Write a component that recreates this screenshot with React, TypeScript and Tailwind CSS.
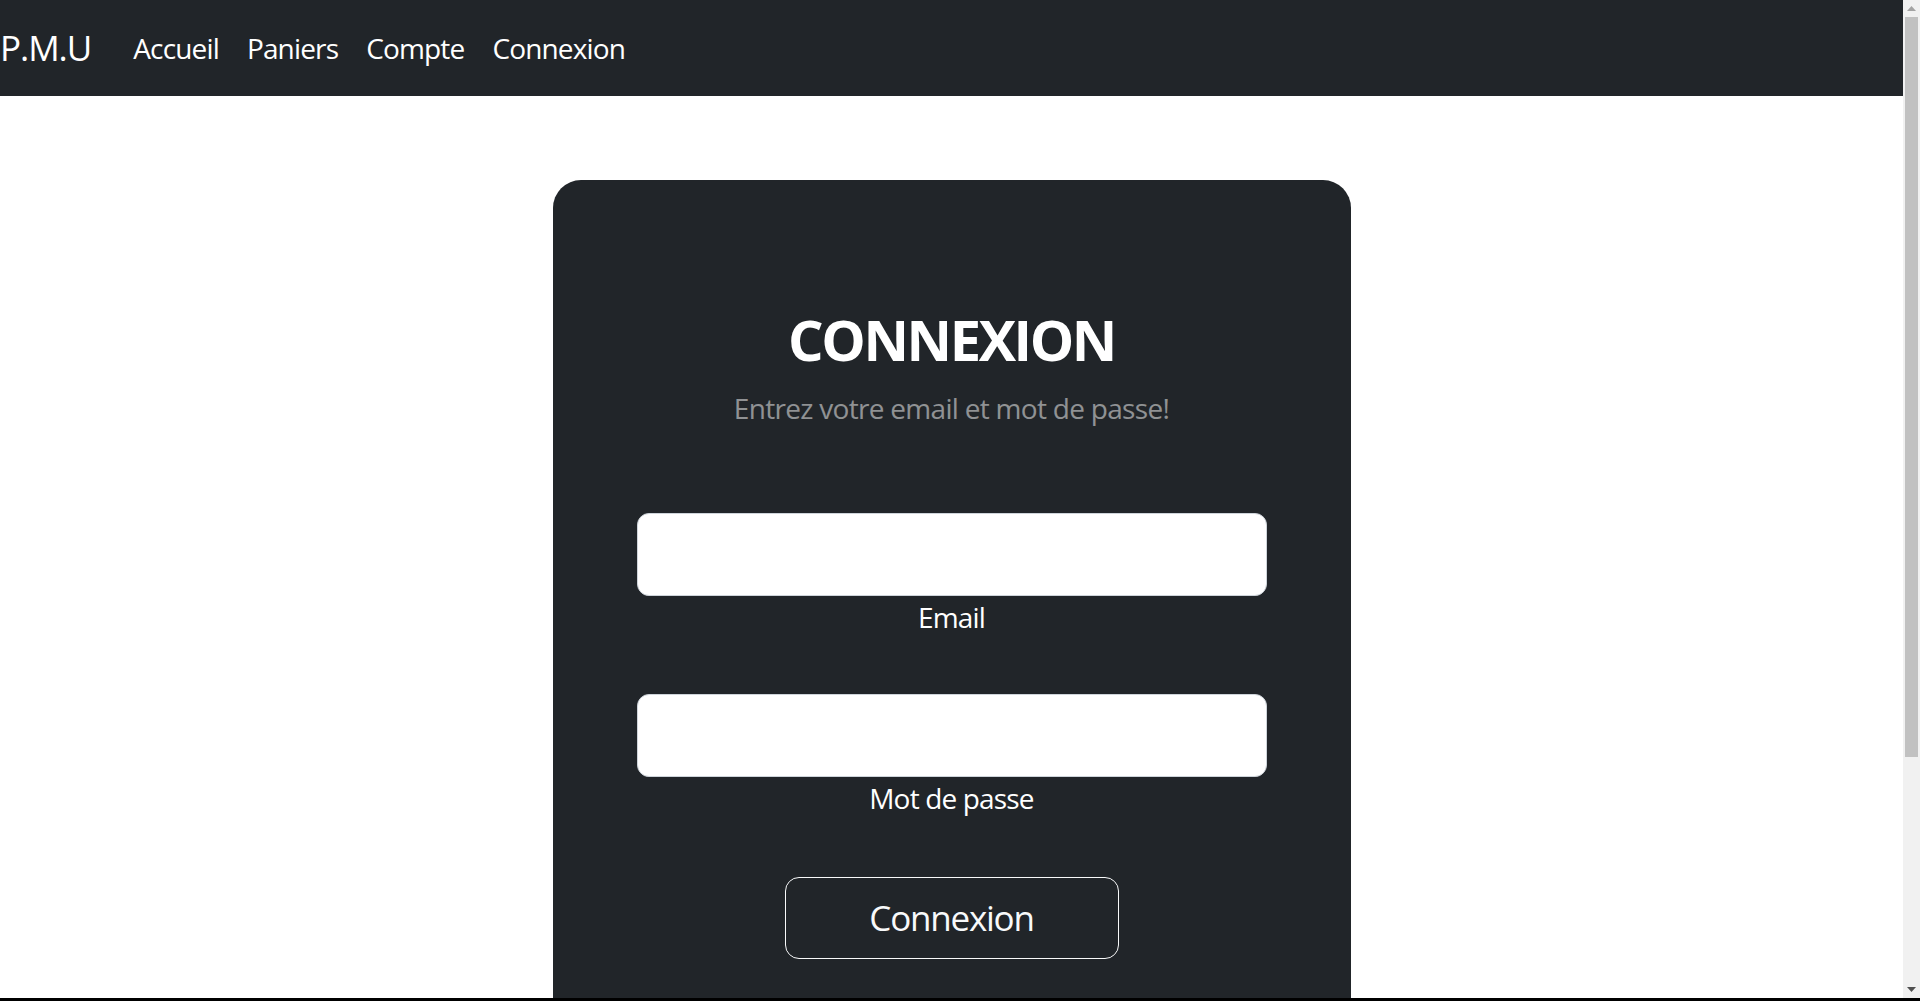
import React from "react";

const NAV_LINKS = ["Accueil", "Paniers", "Compte", "Connexion"];

// browser-style vertical scrollbar (the page is taller than the window)
function Scrollbar() {
  return (
    <div className="flex w-[17px] shrink-0 flex-col bg-[#f1f1f1]">
      <div className="flex h-[17px] shrink-0 items-center justify-center">
        <svg width="9" height="5" viewBox="0 0 9 5">
          <path d="M0 5 L4.5 0 L9 5 Z" fill="#a3a3a3" />
        </svg>
      </div>
      <div className="flex min-h-0 flex-1 flex-col px-[2px]">
        <div className="h-[740px] shrink-0 bg-[#c1c1c1]" />
      </div>
      <div className="flex h-[17px] shrink-0 items-center justify-center">
        <svg width="9" height="5" viewBox="0 0 9 5">
          <path d="M0 0 L9 0 L4.5 5 Z" fill="#505050" />
        </svg>
      </div>
    </div>
  );
}

export default function App() {
  return (
    <div className="flex h-screen flex-col bg-black font-['Open_Sans',sans-serif]">
      <div className="flex min-h-0 flex-1">
        <div className="min-w-0 flex-1 overflow-hidden bg-white">
          <nav className="flex h-[96px] items-center bg-[#212529]">
            <a href="#" className="mr-[28px] text-[35px] leading-[52px] tracking-[-0.03em] text-white">
              P.M.U
            </a>
            <ul className="flex">
              {NAV_LINKS.map((label) => (
                <li key={label}>
                  <a href="#" className="block px-[14px] text-[28px] leading-[42px] tracking-[-0.03em] text-white">
                    {label}
                  </a>
                </li>
              ))}
            </ul>
          </nav>

          <main className="flex justify-center pt-[84px] pb-[174px]">
            <div className="w-[798px] rounded-[28px] bg-[#212529] px-[84px] pt-[126px] pb-[168px] text-center text-white">
              <h2 className="text-[56px] font-bold uppercase leading-[67px] tracking-[-0.043em]">Connexion</h2>
              <p className="mt-[14px] text-[28px] leading-[42px] tracking-[-0.025em] text-white/50">
                Entrez votre email et mot de passe!
              </p>

              <form className="mt-[84px]" onSubmit={(e) => e.preventDefault()}>
                <div className="mb-[56px]">
                  <input
                    type="email"
                    id="email"
                    className="block h-[83px] w-full rounded-[12px] border border-[#ced4da] bg-white px-[28px] text-[35px] text-[#212529] outline-none"
                  />
                  <label htmlFor="email" className="block text-[28px] leading-[42px] tracking-[-0.03em]">
                    Email
                  </label>
                </div>
                <div className="mb-[58px]">
                  <input
                    type="password"
                    id="password"
                    className="block h-[83px] w-full rounded-[12px] border border-[#ced4da] bg-white px-[28px] text-[35px] text-[#212529] outline-none"
                  />
                  <label htmlFor="password" className="block text-[28px] leading-[42px] tracking-[-0.03em]">
                    Mot de passe
                  </label>
                </div>
                <button
                  type="submit"
                  className="mx-auto block h-[82px] w-[334px] rounded-[14px] border border-[#f8f9fa] text-[35px] leading-[52px] tracking-[-0.035em] text-[#f8f9fa]"
                >
                  Connexion
                </button>
              </form>
            </div>
          </main>
        </div>
        <Scrollbar />
      </div>
      <div className="h-[3px] shrink-0 bg-black" />
    </div>
  );
}
